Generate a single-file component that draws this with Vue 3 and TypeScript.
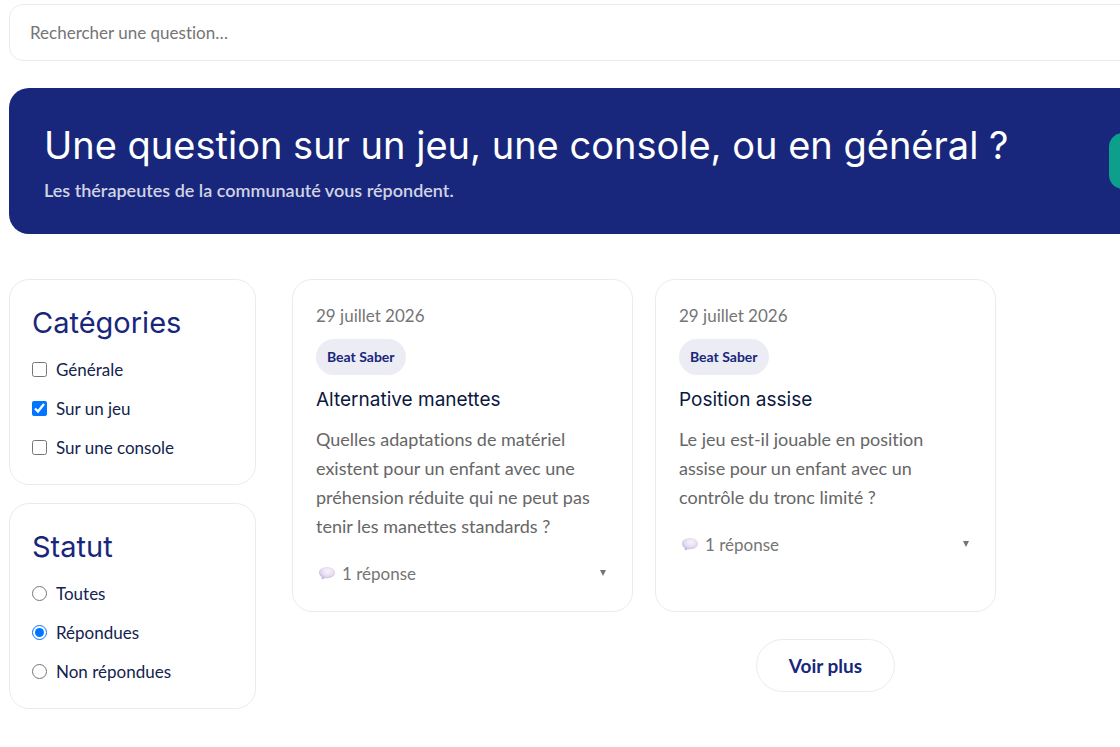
<script setup lang="ts">
import { ref } from 'vue'

interface Question {
  id: number
  date: string
  game: string
  title: string
  body: string
  answers: string
}

const search = ref<string>('')
const categories: string[] = ['Générale', 'Sur un jeu', 'Sur une console']
const selectedCategories = ref<string[]>(['Sur un jeu'])
const statuses: string[] = ['Toutes', 'Répondues', 'Non répondues']
const selectedStatus = ref<string>('Répondues')

const questions: Question[] = [
  {
    id: 1,
    date: '29 juillet 2026',
    game: 'Beat Saber',
    title: 'Alternative manettes',
    body: 'Quelles adaptations de matériel existent pour un enfant avec une préhension réduite qui ne peut pas tenir les manettes standards ?',
    answers: '1 réponse',
  },
  {
    id: 2,
    date: '29 juillet 2026',
    game: 'Beat Saber',
    title: 'Position assise',
    body: 'Le jeu est-il jouable en position assise pour un enfant avec un contrôle du tronc limité ?',
    answers: '1 réponse',
  },
]
</script>

<template>
  <div class="page">
    <div class="container">
      <input v-model="search" class="search" type="search" aria-label="Rechercher une question" placeholder="Rechercher une question…" />

      <section class="banner">
        <div>
          <h1 class="banner-title">Une question sur un jeu, une console, ou en général ?</h1>
          <p class="banner-text">Les thérapeutes de la communauté vous répondent.</p>
        </div>
        <button type="button" class="ask" aria-label="Poser une question"></button>
      </section>

      <div class="layout">
        <aside class="sidebar">
          <section class="panel">
            <h2 class="panel-title">Catégories</h2>
            <div class="options">
              <label v-for="category in categories" :key="category" class="option">
                <input v-model="selectedCategories" type="checkbox" :value="category" />
                <span>{{ category }}</span>
              </label>
            </div>
          </section>
          <section class="panel">
            <h2 class="panel-title">Statut</h2>
            <div class="options">
              <label v-for="status in statuses" :key="status" class="option">
                <input v-model="selectedStatus" type="radio" name="status" :value="status" />
                <span>{{ status }}</span>
              </label>
            </div>
          </section>
        </aside>

        <main class="content">
          <div class="grid">
            <article v-for="question in questions" :key="question.id" class="card">
              <time class="date">{{ question.date }}</time>
              <span class="badge">{{ question.game }}</span>
              <h3 class="card-title">{{ question.title }}</h3>
              <p class="card-body">{{ question.body }}</p>
              <button type="button" class="answers">
                <svg class="bubble" viewBox="0 0 22 18" aria-hidden="true">
                  <defs>
                    <radialGradient :id="`bubble-${question.id}`" cx="0.55" cy="0.35" r="0.65">
                      <stop offset="0" stop-color="#f8f4fb" />
                      <stop offset="0.6" stop-color="#e6dcf1" />
                      <stop offset="1" stop-color="#c2b0dc" />
                    </radialGradient>
                  </defs>
                  <path
                    d="M11 3C6.400 3 3 5.400 3 8.600c0 1.900 1.100 3.500 2.900 4.500.1.900-.1 1.600-.7 2.100 1.500.1 2.700-.4 3.600-1.200.7.100 1.400.2 2.200.2 4.600 0 8-2.400 8-5.600S15.600 3 11 3z"
                    :fill="`url(#bubble-${question.id})`"
                  />
                </svg>
                <span>{{ question.answers }}</span>
                <svg class="caret" viewBox="0 0 6 6" aria-hidden="true"><path d="M0 0h6L3 6z" fill="currentColor" /></svg>
              </button>
            </article>
          </div>
          <button type="button" class="more">Voir plus</button>
        </main>
      </div>
    </div>
  </div>
</template>

<style>
body {
  margin: 0;
  background: #fff;
}
</style>

<style scoped>
.page {
  --navy: #18277b;
  --line: #e8ecf2;
  --muted: #757575;
  --heading: Inter, "Liberation Sans", sans-serif;
  box-sizing: border-box;
  min-height: 100vh;
  padding: 4px 9px 38px;
  overflow: hidden;
  color: #13234f;
  font-family: Lato, "Open Sans", sans-serif;
  font-size: 17px;
  font-variant-ligatures: none;
}

.page *,
.page *::before {
  box-sizing: border-box;
}

.container {
  min-width: 1350px;
}

h1, h2, h3, p {
  margin: 0;
  font-weight: 400;
}

button {
  font-family: inherit;
  font-variant-ligatures: inherit;
  cursor: pointer;
}

.search {
  display: block;
  width: 100%;
  height: 57px;
  padding: 0 20px;
  border: 1px solid var(--line);
  border-radius: 14px;
  background: #fff;
  color: inherit;
  font-family: inherit;
  font-size: 17px;
  font-variant-ligatures: inherit;
  appearance: none;
}

.search::placeholder {
  color: var(--muted);
}

.banner {
  display: flex;
  align-items: center;
  justify-content: space-between;
  margin: 27px 0 45px;
  padding: 30px 36px 30px 35px;
  border-radius: 20px;
  background: var(--navy);
  color: #fff;
}

.banner-title {
  font-family: var(--heading);
  font-size: 38px;
  line-height: 54px;
  white-space: nowrap;
}

.banner-text {
  margin-top: 4px;
  color: #d1d4e5;
  font-size: 18px;
  font-weight: 600;
  line-height: 28px;
}

.ask {
  width: 214px;
  height: 56px;
  border: 0;
  border-radius: 14px;
  background: #0d9f8c;
}

.layout {
  display: grid;
  grid-template-columns: 247px 1fr;
  gap: 36px;
  align-items: start;
}

.sidebar {
  display: grid;
  gap: 18px;
}

.panel {
  padding: 22px;
  border: 1px solid var(--line);
  border-radius: 20px;
}

.panel-title {
  color: var(--navy);
  font-family: var(--heading);
  font-size: 29px;
  line-height: 41px;
}

.options {
  display: grid;
  gap: 10px;
  margin-top: 12px;
}

.option {
  display: flex;
  align-items: center;
  gap: 9px;
  line-height: 29px;
}

.option input {
  flex: none;
  width: 15px;
  height: 15px;
  margin: 0;
  accent-color: #0075ff;
}

.grid {
  display: grid;
  grid-template-columns: repeat(3, 1fr);
  gap: 22px;
}

.card {
  display: flex;
  flex-direction: column;
  align-items: flex-start;
  padding: 23px 23px 24px;
  border: 1px solid var(--line);
  border-radius: 20px;
}

.date {
  color: var(--muted);
  line-height: 25px;
}

.badge {
  margin: 11px 0;
  padding: 0 11px;
  border-radius: 18px;
  background: #ececf5;
  color: var(--navy);
  font-size: 14px;
  font-weight: 700;
  line-height: 36px;
}

.card-title {
  color: #0b1840;
  font-family: var(--heading);
  font-size: 19px;
  line-height: 28px;
}

.card-body {
  margin: 11px 0 18px;
  color: #666;
  font-size: 18px;
  line-height: 29px;
}

.answers {
  display: flex;
  align-items: center;
  width: 100%;
  height: 28px;
  padding: 0 3px 0 0;
  border: 0;
  background: none;
  color: var(--muted);
  font-size: 17px;
}

.bubble {
  width: 22px;
  height: 18px;
  margin-right: 4px;
}

.caret {
  width: 6px;
  height: 6px;
  margin-left: auto;
}

.more {
  display: block;
  height: 53px;
  margin: 27px auto 0;
  padding: 0 32px;
  border: 1px solid var(--line);
  border-radius: 27px;
  background: #fff;
  color: var(--navy);
  font-size: 19px;
  font-weight: 700;
}
</style>
